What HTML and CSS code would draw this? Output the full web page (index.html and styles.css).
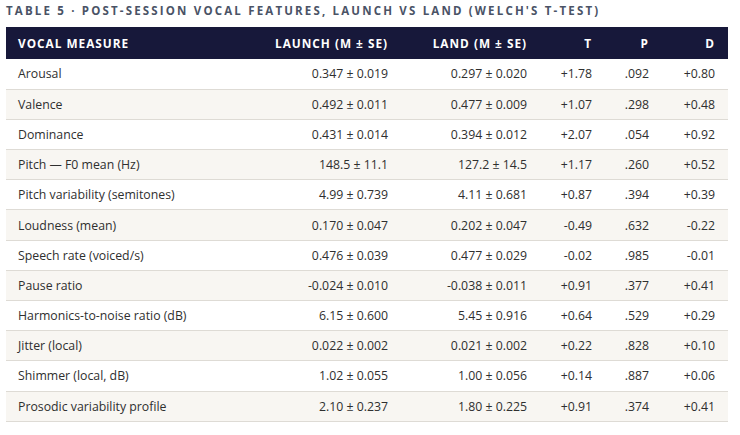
FILE: index.html
```html
<!DOCTYPE html>
<html>
<head>
<meta charset="utf-8">
<link rel="stylesheet" href="styles.css">
</head>
<body>
<div class="wrap">
  <div class="title">Table 5 · Post-session vocal features, Launch vs Land (Welch's t-test)</div>
  <table class="data">
    <colgroup>
      <col class="c-measure">
      <col class="c-launch">
      <col class="c-land">
      <col class="c-t">
      <col class="c-p">
      <col class="c-d">
    </colgroup>
    <thead>
      <tr>
        <th class="l">Vocal measure</th>
        <th>Launch (M ± SE)</th>
        <th>Land (M ± SE)</th>
        <th>t</th>
        <th>p</th>
        <th>d</th>
      </tr>
    </thead>
    <tbody>
      <tr><td class="l">Arousal</td><td>0.347 ± 0.019</td><td>0.297 ± 0.020</td><td>+1.78</td><td>.092</td><td>+0.80</td></tr>
      <tr><td class="l">Valence</td><td>0.492 ± 0.011</td><td>0.477 ± 0.009</td><td>+1.07</td><td>.298</td><td>+0.48</td></tr>
      <tr><td class="l">Dominance</td><td>0.431 ± 0.014</td><td>0.394 ± 0.012</td><td>+2.07</td><td>.054</td><td>+0.92</td></tr>
      <tr><td class="l">Pitch — F0 mean (Hz)</td><td>148.5 ± 11.1</td><td>127.2 ± 14.5</td><td>+1.17</td><td>.260</td><td>+0.52</td></tr>
      <tr><td class="l">Pitch variability (semitones)</td><td>4.99 ± 0.739</td><td>4.11 ± 0.681</td><td>+0.87</td><td>.394</td><td>+0.39</td></tr>
      <tr><td class="l">Loudness (mean)</td><td>0.170 ± 0.047</td><td>0.202 ± 0.047</td><td>-0.49</td><td>.632</td><td>-0.22</td></tr>
      <tr><td class="l">Speech rate (voiced/s)</td><td>0.476 ± 0.039</td><td>0.477 ± 0.029</td><td>-0.02</td><td>.985</td><td>-0.01</td></tr>
      <tr><td class="l">Pause ratio</td><td>-0.024 ± 0.010</td><td>-0.038 ± 0.011</td><td>+0.91</td><td>.377</td><td>+0.41</td></tr>
      <tr><td class="l">Harmonics-to-noise ratio (dB)</td><td>6.15 ± 0.600</td><td>5.45 ± 0.916</td><td>+0.64</td><td>.529</td><td>+0.29</td></tr>
      <tr><td class="l">Jitter (local)</td><td>0.022 ± 0.002</td><td>0.021 ± 0.002</td><td>+0.22</td><td>.828</td><td>+0.10</td></tr>
      <tr><td class="l">Shimmer (local, dB)</td><td>1.02 ± 0.055</td><td>1.00 ± 0.056</td><td>+0.14</td><td>.887</td><td>+0.06</td></tr>
      <tr><td class="l">Prosodic variability profile</td><td>2.10 ± 0.237</td><td>1.80 ± 0.225</td><td>+0.91</td><td>.374</td><td>+0.41</td></tr>
    </tbody>
  </table>
</div>
</body>
</html>
```
FILE: styles.css
```css
html, body {
  margin: 0;
  padding: 0;
  background: #ffffff;
}
body {
  font-family: "Open Sans", "Liberation Sans", sans-serif;
  color: #2f2f2f;
}
.wrap {
  padding: 3px 12px 0 6px;
}
.title {
  font-size: 11.5px;
  font-weight: 700;
  letter-spacing: 2.17px;
  text-transform: uppercase;
  color: #4a5366;
  line-height: 16px;
  margin-bottom: 8px;
  white-space: nowrap;
}
.data {
  width: 722px;
  table-layout: fixed;
  border-collapse: collapse;
  font-size: 12.3px;
}
.c-measure { width: 250px; }
.c-launch { width: 145px; }
.c-land { width: 139px; }
.c-t { width: 65px; }
.c-p { width: 57px; }
.c-d { width: 66px; }
.data th {
  background: #17183a;
  color: #ffffff;
  font-weight: 700;
  font-size: 11.8px;
  letter-spacing: 1px;
  text-transform: uppercase;
  height: 32px;
  padding: 0 13px 0 12px;
  text-align: right;
  box-sizing: border-box;
  white-space: nowrap;
}
.data td {
  height: 30.2px;
  padding: 0 13px 0 12px;
  text-align: right;
  border-bottom: 1px solid #dedbd5;
  box-sizing: border-box;
  white-space: nowrap;
}
.data .l {
  text-align: left;
}
.data tbody tr:nth-child(even) td {
  background: #f8f6f2;
}
```
